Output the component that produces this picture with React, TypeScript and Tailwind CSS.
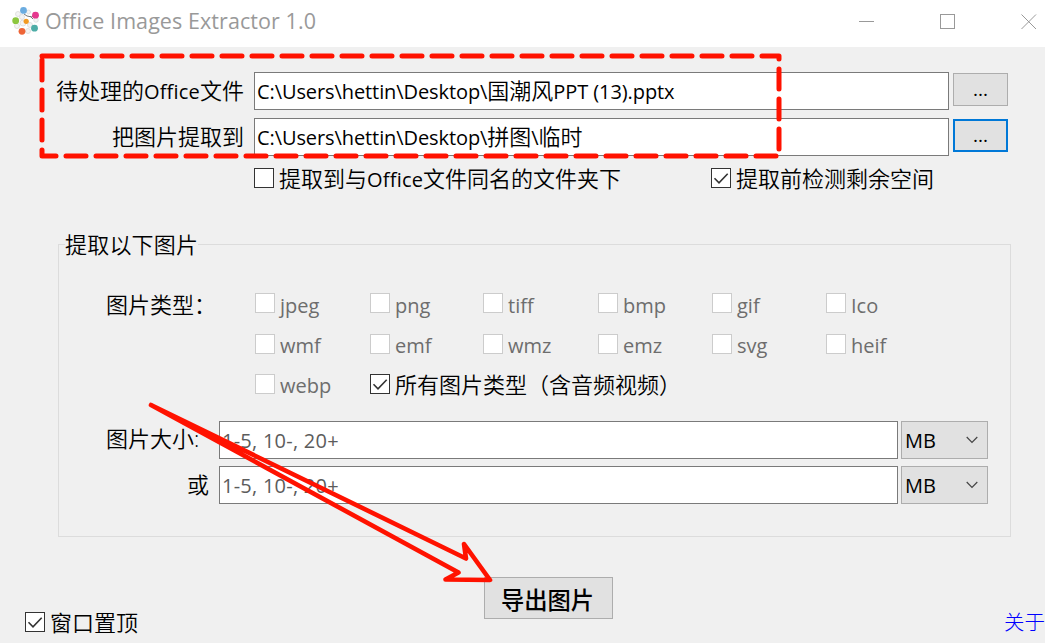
import { FunctionComponent, ReactNode } from "react";

const imageTypes = [
  ["jpeg", "png", "tiff", "bmp", "gif", "Ico"],
  ["wmf", "emf", "wmz", "emz", "svg", "heif"],
];

const Latin: FunctionComponent<{ children: ReactNode }> = ({ children }) => (
  <span className="text-[20px] font-normal tracking-[0.2px]">{children}</span>
);

const PathText: FunctionComponent<{ children: ReactNode }> = ({ children }) => (
  <span className="text-[20px] font-normal tracking-[-0.09px]">{children}</span>
);

const CheckBox: FunctionComponent<{ checked?: boolean; children: ReactNode }> = ({
  checked,
  children,
}) => (
  <label className="flex h-[30px] items-start whitespace-nowrap">
    <span className="mt-[3px] mr-[5px] size-5 shrink-0 border border-[#333333] bg-white">
      {checked && (
        <svg viewBox="0 0 18 18" className="size-[18px]" fill="none">
          <path d="M2.5 9.3L7 13.8L15.7 4.8" stroke="#333" strokeWidth="1.6" />
        </svg>
      )}
    </span>
    <span className="leading-[27px]">{children}</span>
  </label>
);

const TypeBox: FunctionComponent<{ name: string; raised?: boolean }> = ({
  name,
  raised,
}) => (
  <label className="flex h-[30px] items-start text-[20px] font-normal text-[#6d6d6d]">
    <span
      className={
        raised
          ? "mt-[2px] mr-[5px] size-5 border border-[#cccccc] bg-white"
          : "mt-[3px] mr-[5px] size-5 border border-[#cccccc] bg-white"
      }
    />
    <span className="leading-[30px]">{name}</span>
  </label>
);

const PathRow: FunctionComponent<{
  label: ReactNode;
  focused?: boolean;
  children: ReactNode;
}> = ({ label, focused, children }) => (
  <div className="flex h-[38px]">
    <div className="w-[244px] text-right leading-[36px]">{label}</div>
    <div className="ml-[10px] w-[695px] border border-[#7a7a7a] bg-white pl-0.5 leading-[34px] whitespace-nowrap">
      {children}
    </div>
    <button
      className={
        focused
          ? "mt-px ml-1 flex h-[33px] w-[55px] items-center justify-center border-2 border-[#0078d7] bg-[#e1e1e1] text-[19px] font-normal"
          : "mt-px ml-1 flex h-[33px] w-[55px] items-center justify-center border border-[#adadad] bg-[#e1e1e1] text-[19px] font-normal"
      }
    >
      ...
    </button>
  </div>
);

const SizeRow: FunctionComponent<{ label: ReactNode; labelClass: string }> = ({
  label,
  labelClass,
}) => (
  <div className="flex h-[38px]">
    <div className={labelClass}>{label}</div>
    <div className="w-[679px] border border-[#7a7a7a] bg-white pl-0.5 text-[20px] leading-[38px] font-normal tracking-[0.25px] text-[#5c5c5c]">
      1-5, 10-, 20+
    </div>
    <div className="ml-[3px] flex w-[87px] items-start justify-between border border-[#adadad] bg-[#e1e1e1] pr-[9px] pl-[3px] text-[20px] leading-[38px] font-normal">
      MB
      <svg
        width="12"
        height="8"
        viewBox="0 0 12 8"
        className="mt-[14px]"
        fill="none"
      >
        <path d="M0.7 1L6 6.3L11.3 1" stroke="#444" strokeWidth="1.2" />
      </svg>
    </div>
  </div>
);

const Logo = () => (
  <svg width="30" height="30" viewBox="0 0 30 30" className="ml-[11px]">
    <g fill="#f4f4f4" stroke="#dadada" strokeWidth="0.8">
      <circle cx="7" cy="8" r="2.5" />
      <circle cx="6" cy="20" r="2.5" />
      <circle cx="12" cy="17" r="3" />
      <circle cx="17" cy="25" r="2.5" />
      <circle cx="19" cy="19" r="2.5" />
      <circle cx="25" cy="14" r="2.3" />
      <circle cx="11" cy="11" r="2.5" />
      <circle cx="17.5" cy="6" r="2" />
    </g>
    <path
      d="M13 8L16 10L21 11L24 8M19 10L22 13"
      stroke="#777"
      strokeWidth="1"
      fill="none"
    />
    <circle cx="12.5" cy="4.4" r="3.4" fill="#6bace0" />
    <circle cx="24.5" cy="9.2" r="3.4" fill="#e5388e" />
    <circle cx="4.7" cy="14.7" r="3.4" fill="#8cc63f" />
    <circle cx="15.2" cy="15.3" r="2.6" fill="#f29a22" />
    <circle cx="23.5" cy="22.2" r="3.4" fill="#4eada7" />
    <circle cx="11" cy="25.3" r="3.4" fill="#ee6537" />
  </svg>
);

const TitleBar = () => (
  <div className="flex h-[47px] bg-white pt-[6px]">
    <Logo />
    <span className="ml-1 text-[21.5px] leading-[30px] font-normal tracking-[0.07px] text-[#999999]">
      Office Images Extractor 1.0
    </span>
    <svg
      width="178"
      height="16"
      viewBox="0 0 178 16"
      className="mt-[8px] mr-[8px] ml-auto"
      fill="none"
      stroke="#999"
    >
      <path d="M0 7.5H15" />
      <rect x="81.5" y="0.5" width="14" height="14" />
      <path d="M162.5 0.5L177 15M177 0.5L162.5 15" />
    </svg>
  </div>
);

// red marker strokes drawn over the window
const Annotations = () => (
  <svg
    className="pointer-events-none absolute inset-0"
    width="1045"
    height="643"
    viewBox="0 0 1045 643"
    fill="none"
    stroke="#ff1200"
    strokeWidth="5"
    strokeLinecap="round"
    strokeLinejoin="round"
  >
    <path d="M42 56H779V156H42V56" strokeDasharray="20 10" />
    <path
      d="M151 405L466 558.5L464 544L490 580L445.500 579.500L458.500 572.500Z"
      strokeWidth="4.6"
    />
  </svg>
);

const App = () => {
  return (
    <div className="relative h-[643px] w-[1045px] overflow-hidden bg-[#f0f0f0] font-['Open_Sans','Noto_Sans_CJK_SC',sans-serif] text-[22px] font-[350] text-black">
      <TitleBar />

      <div className="mt-[25px] flex flex-col gap-2">
        <PathRow
          label={
            <>
              待处理的<Latin>Office</Latin>文件
            </>
          }
        >
          <PathText>C:\Users\hettin\Desktop\</PathText>国潮风
          <PathText>PPT (13).pptx</PathText>
        </PathRow>
        <PathRow label="把图片提取到" focused>
          <PathText>C:\Users\hettin\Desktop\</PathText>拼图
          <PathText>\</PathText>临时
        </PathRow>
      </div>

      <div className="mt-[9px] flex pl-[254px]">
        <div className="w-[457px]">
          <CheckBox>
            提取到与<Latin>Office</Latin>文件同名的文件夹下
          </CheckBox>
        </div>
        <CheckBox checked>提取前检测剩余空间</CheckBox>
      </div>

      <fieldset className="mt-[35px] ml-[58px] h-[307px] w-[953px] border border-[#dcdcdc] pl-[47px]">
        <legend className="-ml-[41px] h-[28px] leading-[28px] tracking-[0.2px]">
          提取以下图片
        </legend>
        <div className="mt-[33px] flex">
          <div className="w-[149px] leading-[27px]">图片类型：</div>
          <div className="flex flex-col gap-[10px]">
            {imageTypes.map((row, i) => (
              <div
                key={row[0]}
                className="grid grid-cols-[115px_113px_115px_114px_114px_90px]"
              >
                {row.map((type) => (
                  <TypeBox key={type} name={type} raised={i === 0} />
                ))}
              </div>
            ))}
            <div className="flex">
              <div className="w-[115px]">
                <TypeBox name="webp" />
              </div>
              <CheckBox checked>所有图片类型（含音频视频）</CheckBox>
            </div>
          </div>
        </div>
        <div className="mt-[20px] flex flex-col gap-[7px]">
          <SizeRow label="图片大小:" labelClass="w-[113px] leading-[35px]" />
          <SizeRow
            label="或"
            labelClass="w-[113px] pr-[10px] text-right leading-[37px]"
          />
        </div>
      </fieldset>

      <button className="mt-[40px] ml-[484px] block h-[42px] w-[129px] border border-[#adadad] bg-[#e1e1e1] pt-0.5 pr-0.5 text-[23.3px] leading-[40px] font-medium">
        导出图片
      </button>

      <div className="mt-[-10px] flex justify-between pl-[25px]">
        <CheckBox checked>窗口置顶</CheckBox>
        <a className="text-[20.5px] leading-[27px] font-light text-[#0000ff]">
          关于
        </a>
      </div>

      <Annotations />
    </div>
  );
};

export default App;
